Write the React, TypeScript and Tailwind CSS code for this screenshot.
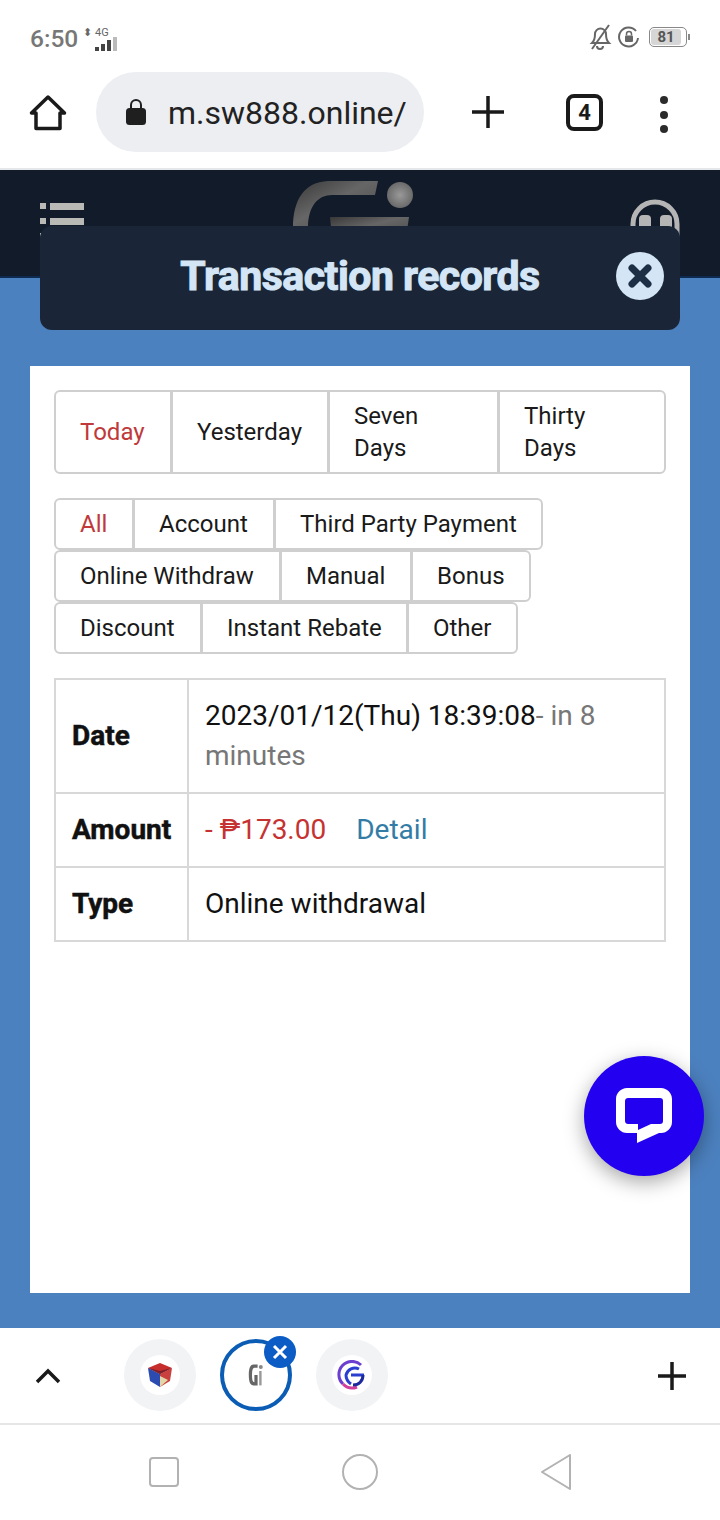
import React from "react";

const font = { fontFamily: "Roboto, 'Noto Sans', sans-serif" };

function Seg({ label, w, active, first, last, twoLine }: { label: string; w: number; active?: boolean; first?: boolean; last?: boolean; twoLine?: boolean }) {
  return (
    <div
      style={{ width: w }}
      className={`border-2 border-[#cfcfcf] flex items-center bg-white pl-[24px] text-[24px] leading-[32px] ${active ? "text-[#c0393b]" : "text-[#1a1a1a]"} ${first ? "rounded-l-[6px]" : "-ml-[1px]"} ${last ? "rounded-r-[6px]" : ""} ${twoLine ? "h-[84px]" : "h-[52px]"}`}
    >
      <span className={twoLine ? "w-[70px]" : "whitespace-nowrap"}>{label}</span>
    </div>
  );
}

function Tab({ bg, ring, children }: { bg?: boolean; ring?: boolean; children: React.ReactNode }) {
  return (
    <div className={`relative w-[72px] h-[72px] rounded-full flex items-center justify-center ${bg ? "bg-[#f1f3f5]" : ""} ${ring ? "border-[4px] border-[#0b5cb5] bg-white" : ""}`}>
      <div className="w-[40px] h-[40px] rounded-full bg-white flex items-center justify-center">{children}</div>
    </div>
  );
}

export default function App() {
  return (
    <div style={font} className="w-[720px] h-[1520px] bg-white flex flex-col overflow-hidden">
      {/* Status bar */}
      <div className="h-[74px] pt-[23px] px-[30px] flex items-start justify-between text-[#777]">
        <div className="flex items-center">
          <span className="text-[24.5px] leading-[32px] font-medium">6:50</span>
          <div className="ml-[4px] flex flex-col items-start">
            <span className="text-[11px] leading-[10px] text-[#666] pl-[1px]">⬍ 4G</span>
            <svg width="36" height="14" viewBox="0 0 36 14" className="-mt-[1px]">
              <rect x="13" y="10" width="4" height="4" fill="#444" />
              <rect x="19" y="7" width="4" height="7" fill="#444" />
              <rect x="25" y="3" width="4" height="11" fill="#444" />
              <rect x="31" y="0" width="4" height="14" fill="#bbb" />
            </svg>
          </div>
        </div>
        <div className="flex items-center gap-[6px] pt-[1px]">
          <svg width="24" height="26" viewBox="0 0 24 26" fill="none" stroke="#666" strokeWidth="2">
            <path d="M4 19c2-2 3-5 3-9a5.500 5.500 0 0 1 11 0c0 4 1 7 3 9z" />
            <path d="M9 22a3 3 0 0 0 6 0" />
            <path d="M21 1 4 25" />
          </svg>
          <svg width="22" height="22" viewBox="0 0 22 22" fill="none" stroke="#666" strokeWidth="2">
            <path d="M18 5a9.500 9.500 0 1 0 2 7" />
            <rect x="7" y="9.500" width="8" height="6.500" fill="#666" stroke="none" rx="1" />
            <path d="M8.500 9.500V8a2.500 2.500 0 0 1 5 0v1.500" strokeWidth="1.500" />
          </svg>
          <div className="ml-[3px] w-[38px] h-[20px] rounded-[5px] border border-[#888] p-[1px] flex">
            <div className="w-[30px] h-full bg-[#d6d6d6] rounded-[3px] flex items-center justify-center text-[15px] font-bold text-[#555]">81</div>
          </div>
          <div className="-ml-[5px] w-[2px] h-[6px] bg-[#888]" />
        </div>
      </div>

      {/* Browser bar */}
      <div className="h-[96px] border-b-2 border-[#e4e8ea] flex items-start relative">
        <div className="w-[96px] flex justify-center pt-[20px] shrink-0">
          <svg width="38" height="38" viewBox="0 0 38 38" fill="none" stroke="#1a1a1a" strokeWidth="3.500" strokeLinejoin="round">
            <path d="M2.500 19 19 3l16.500 16H31v15.500H7V19z" />
          </svg>
        </div>
        <div className="w-[328px] h-[80px] -mt-[2px] rounded-full bg-[#eceef2] flex items-center pl-[29px] shrink-0">
          <svg width="22" height="28" viewBox="0 0 22 28" fill="#1f1f1f">
            <path d="M6 11V7a5 5 0 0 1 10 0v4" fill="none" stroke="#1f1f1f" strokeWidth="2" />
            <rect x="1" y="10" width="20" height="17" rx="3.500" />
          </svg>
          <span className="ml-[21px] mt-[1px] text-[32px] leading-[40px] text-[#222] whitespace-nowrap">m.sw888.online/</span>
        </div>
        <div className="ml-[46px] mt-[20px]">
          <svg width="36" height="36" viewBox="0 0 36 36" stroke="#1a1a1a" strokeWidth="3.500"><path d="M18 2v32M2 18h32" /></svg>
        </div>
        <div className="ml-[60px] mt-[20px] w-[37px] h-[37px] border-[4px] border-[#1a1a1a] rounded-[8px] flex items-center justify-center text-[22px] font-bold text-[#1a1a1a]">4</div>
        <div className="ml-[57px] mt-[22px] flex flex-col gap-[6.500px]">
          <div className="w-[8px] h-[8px] rounded-full bg-[#2b2b2b]" />
          <div className="w-[8px] h-[8px] rounded-full bg-[#2b2b2b]" />
          <div className="w-[8px] h-[8px] rounded-full bg-[#2b2b2b]" />
        </div>
      </div>

      {/* Page */}
      <div className="relative h-[1158px] shrink-0 bg-[#4c81bf] flex flex-col">
        {/* Site header */}
        <div className="h-[108px] bg-[#121b2a] border-b-2 border-[#0e2a50] relative flex justify-between px-[40px] pt-[33px]">
          <div className="flex flex-col gap-[8px]">
            {[0, 1, 2].map((i) => (
              <div key={i} className="flex gap-[4px]">
                <div className="w-[6px] h-[6px] bg-[#b9bab6]" />
                <div className="w-[34px] h-[7px] bg-[#b9bab6]" />
              </div>
            ))}
          </div>
          <svg width="124" height="60" viewBox="0 0 124 60" className="absolute left-[290px] top-[8px]">
            <defs>
              <linearGradient id="m" x1="0" x2="1" y1="0" y2="1">
                <stop offset="0" stopColor="#383838" />
                <stop offset="0.45" stopColor="#666" />
                <stop offset="1" stopColor="#4a4a4a" />
              </linearGradient>
              <radialGradient id="c">
                <stop offset="0" stopColor="#999" />
                <stop offset="1" stopColor="#6a6a6a" />
              </radialGradient>
            </defs>
            <path d="M3 50C3 22 14 4 38 3h50l-3 14H42C28 17 18 28 18 50z" fill="url(#m)" />
            <circle cx="110" cy="17" r="13" fill="url(#c)" />
            <path d="M40 39h79l-3 21H42z" fill="url(#m)" />
          </svg>
          <svg width="50" height="50" viewBox="0 0 50 50" className="mt-[-5px]">
            <path d="M3 42V26a22 22 0 0 1 44 0v16" fill="none" stroke="#b5b5b5" strokeWidth="5" />
            <rect x="9" y="17" width="12" height="32" rx="4" fill="#b5b5b5" />
            <rect x="30" y="17" width="12" height="32" rx="4" fill="#b5b5b5" />
          </svg>
        </div>

        {/* Modal title */}
        <div className="absolute left-[40px] top-[56px] w-[640px] h-[104px] rounded-[12px] bg-[#1a2638] flex items-center justify-center">
          <span className="text-[41px] leading-[48px] font-bold text-[#d4e6f6] tracking-[-0.5px] -mt-[5px] [-webkit-text-stroke:1px_#d4e6f6]">Transaction records</span>
          <div className="absolute right-[16px] top-[26px] w-[48px] h-[48px] rounded-full bg-[#d4e6f6] flex items-center justify-center">
            <svg width="28" height="28" viewBox="0 0 28 28" stroke="#1c2f45" strokeWidth="7" strokeLinecap="round"><path d="M6 6l16 16M22 6 6 22" /></svg>
          </div>
        </div>

        {/* Card */}
        <div className="mt-[88px] ml-[30px] mr-[30px] h-[927px] bg-white pt-[24px] pl-[24px]">
          <div className="flex">
            <Seg label="Today" w={118} active first twoLine />
            <Seg label="Yesterday" w={158} twoLine />
            <Seg label="Seven Days" w={171} twoLine />
            <Seg label="Thirty Days" w={168} last twoLine />
          </div>
          <div className="mt-[24px] flex flex-col">
            <div className="flex">
              <Seg label="All" w={80} active first />
              <Seg label="Account" w={142} />
              <Seg label="Third Party Payment" w={269} last />
            </div>
            <div className="flex">
              <Seg label="Online Withdraw" w={227} first />
              <Seg label="Manual" w={132} />
              <Seg label="Bonus" w={120} last />
            </div>
            <div className="flex">
              <Seg label="Discount" w={148} first />
              <Seg label="Instant Rebate" w={207} />
              <Seg label="Other" w={111} last />
            </div>
          </div>

          <div className="mt-[24px] w-[612px] border-2 border-[#d8d8d8] text-[28px] leading-[40px]">
            <div className="flex h-[114px] border-b-2 border-[#d8d8d8]">
              <div className="w-[133px] border-r-2 border-[#d8d8d8] pl-[16px] flex items-center font-bold text-[#111] [-webkit-text-stroke:0.5px_#111]">Date</div>
              <div className="flex-1 pl-[16px] pt-[16px] text-[#111]">
                <div className="flex">
                  <span>2023/01/12(Thu) 18:39:08</span>
                  <span className="text-[#777]">- in 8</span>
                </div>
                <div className="text-[#777]">minutes</div>
              </div>
            </div>
            <div className="flex h-[74px] border-b-2 border-[#d8d8d8]">
              <div className="w-[133px] border-r-2 border-[#d8d8d8] pl-[16px] flex items-center font-bold text-[#111] [-webkit-text-stroke:0.5px_#111]">Amount</div>
              <div className="flex-1 pl-[16px] flex items-center">
                <span className="text-[#c63232]">- ₱173.00</span>
                <span className="ml-[30px] text-[#337ca6]">Detail</span>
              </div>
            </div>
            <div className="flex h-[72px]">
              <div className="w-[133px] border-r-2 border-[#d8d8d8] pl-[16px] flex items-center font-bold text-[#111] [-webkit-text-stroke:0.5px_#111]">Type</div>
              <div className="flex-1 pl-[16px] flex items-center text-[#111]">Online withdrawal</div>
            </div>
          </div>
        </div>

        {/* Chat button */}
        <div className="absolute left-[584px] top-[886px] w-[120px] h-[120px] rounded-full bg-[#2400f0] shadow-[0_6px_20px_rgba(0,0,0,0.35)] flex items-center justify-center">
          <svg width="58" height="60" viewBox="0 0 58 60" className="mt-[1px]">
            <path fillRule="evenodd" fill="#fff" d="M12 1h34c6 0 11 5 11 11v23c0 6-5 11-11 11H44L22 56V46h-10C6 46 1 41 1 35V12C1 6 6 1 12 1zm1 10c-1.500 0-3 1-3 3v20c0 2 1.500 3 3 3h10v6l13-6h9c2 0 3-1 3-3V14c0-2-1-3-3-3z" />
          </svg>
        </div>
      </div>

      {/* Tabs strip */}
      <div className="h-[97px] bg-white border-b-2 border-[#e6e6e6] flex items-center relative">
        <div className="w-[95px] flex justify-center">
          <svg width="26" height="18" viewBox="0 0 26 18" fill="none" stroke="#1a1a1a" strokeWidth="3.500"><path d="M2 15 13 4l11 11" /></svg>
        </div>
        <div className="flex gap-[24px] ml-[29px] -mt-[2px]">
          <Tab bg>
            <svg width="28" height="28" viewBox="0 0 28 28">
              <path d="M2 7 14 2l12 5-12 6z" fill="#c62d2d" />
              <path d="M2 7l12 6v13L4 20z" fill="#2c4bb0" />
              <path d="M26 7 14 13v13l10-6z" fill="#c9413f" />
              <path d="M14 15l8 4-8 7z" fill="#e3d6a8" />
              <path d="M2 7 14 13 26 7l-12 3z" fill="#7b1f2a" />
            </svg>
          </Tab>
          <Tab ring>
            <svg width="16" height="26" viewBox="0 0 20 30">
              <path d="M12 2H7C3 2 1 6 1 15s2 13 6 13h5V15H8v9C6 24 5 21 5 15s1-9 3-9h4z" fill="#666" />
              <circle cx="16" cy="5" r="2.500" fill="#888" />
              <rect x="14" y="10" width="3" height="18" fill="#999" />
            </svg>
          </Tab>
          <Tab bg>
            <svg width="30" height="30" viewBox="0 0 30 30" fill="none" strokeWidth="3">
              <path d="M24 5A13 13 0 0 0 6 24" stroke="#6d3fd0" />
              <path d="M6 24a13 13 0 0 0 14 3" stroke="#d13f9c" />
              <path d="M27 15H14M22 9a9 9 0 0 0-13 6c0 4 2 7 5 9" stroke="#2a3fd0" />
              <path d="M26 15c0 6-4 10-10 10" stroke="#1d2a9c" />
            </svg>
          </Tab>
        </div>
        <div className="absolute left-[264px] top-[8px] w-[32px] h-[32px] rounded-full bg-[#0b5cc5] flex items-center justify-center">
          <svg width="18" height="18" viewBox="0 0 18 18" stroke="#fff" strokeWidth="3"><path d="M3 3l12 12M15 3 3 15" /></svg>
        </div>
        <svg width="30" height="30" viewBox="0 0 30 30" stroke="#1a1a1a" strokeWidth="3.500" className="ml-auto mr-[33px]"><path d="M15 1v28M1 15h28" /></svg>
      </div>

      {/* Android nav */}
      <div className="flex-1 bg-white flex items-start justify-between pl-[149px] pr-[148px] pt-[29px]">
        <div className="w-[30px] h-[30px] mt-[3px] rounded-[4px] border-2 border-[#b2b2b2]" />
        <div className="w-[36px] h-[36px] rounded-full border-2 border-[#b2b2b2]" />
        <svg width="32" height="36" viewBox="0 0 32 36" fill="none" stroke="#b2b2b2" strokeWidth="2" strokeLinejoin="round"><path d="M30 1v34L2 18z" /></svg>
      </div>
    </div>
  );
}
